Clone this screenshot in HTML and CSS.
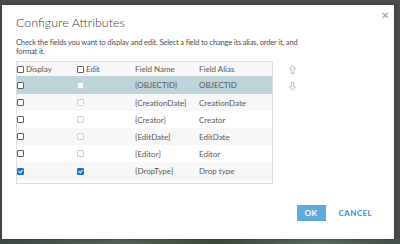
FILE: index.html
```html
<!DOCTYPE html>
<html lang="en">
<head>
    <meta charset="UTF-8">
    <title>Configure Attributes</title>
    <link rel="stylesheet" href="styles.css">
</head>
<body>
    <div class="backdrop">
        <div class="dialog">
            <button class="close" type="button">&#x2715;</button>
            <h1 class="title">Configure Attributes</h1>
            <p class="description">Check the fields you want to display and edit. Select a field to change its alias, order it, and format it.</p>

            <div class="body">
                <div class="table">
                    <div class="row head">
                        <span class="cell"><span class="box"></span>Display</span>
                        <span class="cell"><span class="box"></span>Edit</span>
                        <span class="cell">Field Name</span>
                        <span class="cell">Field Alias</span>
                    </div>
                    <div class="row selected">
                        <span class="cell"><span class="box"></span></span>
                        <span class="cell"><span class="box disabled"></span></span>
                        <span class="cell">{OBJECTID}</span>
                        <span class="cell">OBJECTID</span>
                    </div>
                    <div class="row">
                        <span class="cell"><span class="box"></span></span>
                        <span class="cell"><span class="box disabled"></span></span>
                        <span class="cell">{CreationDate}</span>
                        <span class="cell">CreationDate</span>
                    </div>
                    <div class="row">
                        <span class="cell"><span class="box"></span></span>
                        <span class="cell"><span class="box disabled"></span></span>
                        <span class="cell">{Creator}</span>
                        <span class="cell">Creator</span>
                    </div>
                    <div class="row">
                        <span class="cell"><span class="box"></span></span>
                        <span class="cell"><span class="box disabled"></span></span>
                        <span class="cell">{EditDate}</span>
                        <span class="cell">EditDate</span>
                    </div>
                    <div class="row">
                        <span class="cell"><span class="box"></span></span>
                        <span class="cell"><span class="box disabled"></span></span>
                        <span class="cell">{Editor}</span>
                        <span class="cell">Editor</span>
                    </div>
                    <div class="row">
                        <span class="cell"><span class="box checked"></span></span>
                        <span class="cell"><span class="box checked"></span></span>
                        <span class="cell">{DropType}</span>
                        <span class="cell">Drop type</span>
                    </div>
                </div>

                <div class="order">
                    <svg width="7" height="9" viewBox="0 0 7 9"><path d="M3.5 0.5 L6.5 4 L4.8 4 L4.8 8.5 L2.2 8.5 L2.2 4 L0.5 4 Z" fill="none" stroke="#bbb" stroke-width="1"/></svg>
                    <svg width="7" height="9" viewBox="0 0 7 9"><path d="M3.5 8.5 L6.5 5 L4.8 5 L4.8 0.5 L2.2 0.5 L2.2 5 L0.5 5 Z" fill="none" stroke="#bbb" stroke-width="1"/></svg>
                </div>
            </div>

            <div class="actions">
                <button class="ok" type="button">OK</button>
                <button class="cancel" type="button">CANCEL</button>
            </div>
        </div>
        <div class="map"></div>
    </div>
</body>
</html>
```

FILE: styles.css
```css
body {
    margin: 0;
    font-family: Lato, "Open Sans", sans-serif;
    background-color: #4b4b4b;
}
.backdrop {
    width: 400px;
    height: 244px;
    overflow: hidden;
    padding: 5px 0 0 2px;
    box-sizing: border-box;
}
.dialog {
    position: relative;
    width: 392px;
    height: 234px;
    background-color: #fff;
    box-sizing: border-box;
    padding: 0 14px;
    box-shadow: 0 0 3px rgba(0, 0, 0, 0.4);
}
.map {
    height: 5px;
    margin-left: -2px;
    background: linear-gradient(90deg, #3d4a45, #566257 30%, #3f4a3e 55%, #5a6a5f 80%, #45504a);
}
.close {
    position: absolute;
    top: 5px;
    right: 5px;
    border: none;
    background: none;
    color: #9a9a9a;
    font-size: 10px;
    padding: 0;
    cursor: pointer;
}
.title {
    margin: 0;
    padding-top: 9px;
    font-size: 12.5px;
    font-weight: 300;
    color: #3c3c3c;
    line-height: 18px;
}
.description {
    margin: 6px 0 0 0;
    width: 292px;
    font-size: 7.5px;
    letter-spacing: -0.15px;
    line-height: 9px;
    color: #4c4c4c;
}
.body {
    display: flex;
    gap: 16px;
    margin-top: 5px;
}
.table {
    width: 257px;
    border: 1px solid #dcdcdc;
    padding-bottom: 3px;
    box-sizing: border-box;
    font-size: 8px;
    color: #595959;
}
.row {
    display: grid;
    grid-template-columns: 60px 58px 64px 1fr;
    height: 17px;
    align-items: center;
}
.row.head {
    height: 14px;
    background-color: #f3f3f3;
}
.row:nth-child(odd) {
    background-color: #f7f7f7;
}
.row:last-child {
    height: 18px;
}
.row.selected {
    height: 18px;
    background-color: #bdd4da;
}
.cell {
    display: flex;
    align-items: center;
    white-space: nowrap;
}
.box {
    width: 5px;
    height: 5px;
    border: 1px solid #5e5e5e;
    border-radius: 1px;
    margin-right: 2px;
    background-color: #fff;
}
.box.disabled {
    border-color: #cfcfcf;
}
.box.checked {
    border-color: #1a6fd9;
    background-color: #1a6fd9;
    position: relative;
}
.box.checked::after {
    content: "";
    position: absolute;
    left: 1px;
    top: 0;
    width: 2px;
    height: 3px;
    border-right: 1px solid #fff;
    border-bottom: 1px solid #fff;
    transform: rotate(40deg);
}
.order {
    display: flex;
    flex-direction: column;
    gap: 8px;
    padding-top: 4px;
}
.actions {
    display: flex;
    justify-content: flex-end;
    align-items: center;
    gap: 13px;
    margin-top: 21px;
    padding-right: 8px;
}
.actions button {
    font-family: Lato, "Open Sans", sans-serif;
    font-size: 8px;
    font-weight: bold;
    letter-spacing: 0.4px;
    border: none;
    cursor: pointer;
}
.ok {
    width: 29px;
    height: 16px;
    background-color: #5eaadf;
    color: #fff;
}
.cancel {
    background: none;
    color: #3a8ed3;
    padding: 0;
}
```
